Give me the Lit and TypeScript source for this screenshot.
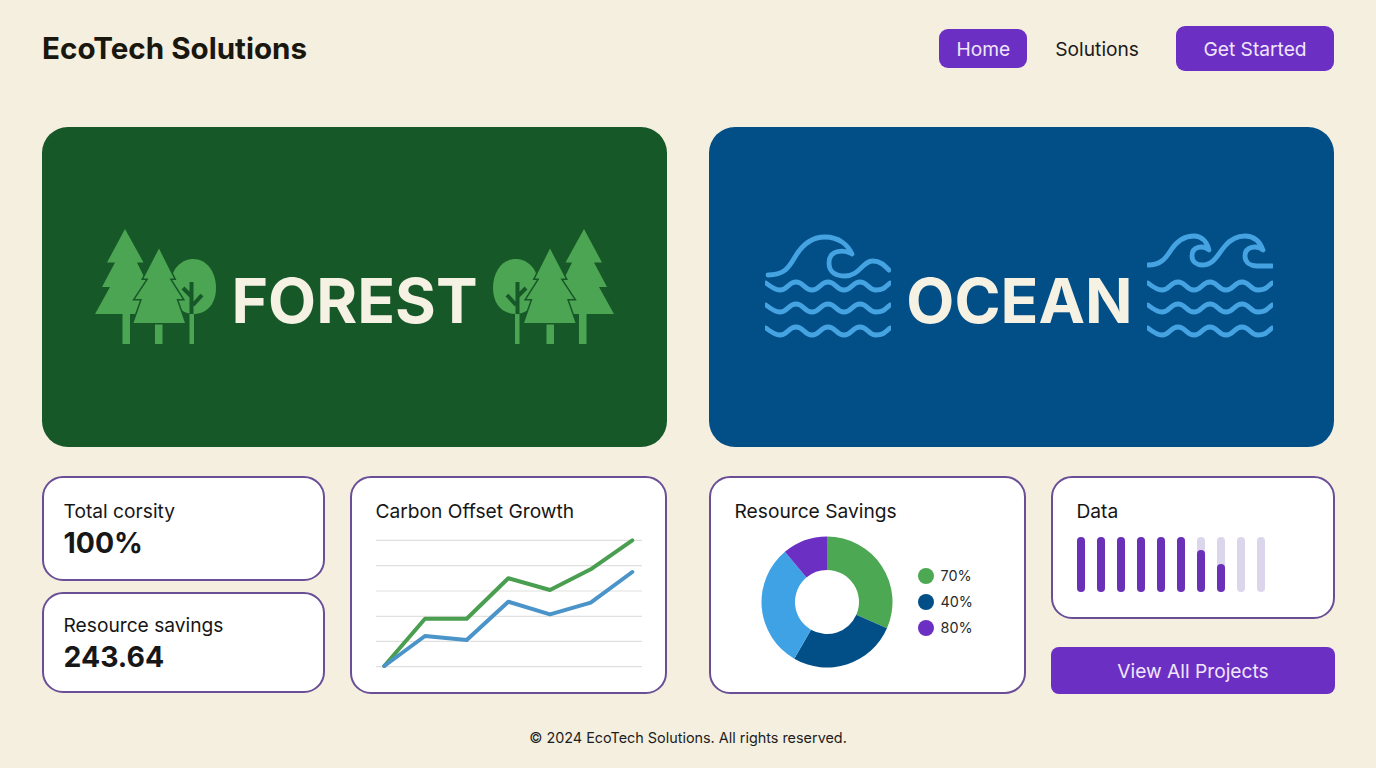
import { LitElement, html, css, svg } from "lit";
import { customElement } from "lit/decorators.js";

const ripple = (c: number) =>
  `M1 ${c - 3} C6 ${c + 1} 10 ${c + 4} 15 ${c + 4} C23 ${c + 4} 23 ${c - 4} 31 ${c - 4} S39 ${c + 4} 47 ${c + 4} S55 ${c - 4} 63 ${c - 4} S71 ${c + 4} 79 ${c + 4} S87 ${c - 4} 95 ${c - 4} S103 ${c + 4} 111 ${c + 4} S120 ${c + 1} 125 ${c - 3}`;

const polar = (r: number, deg: number) => {
  const a = ((deg - 90) * Math.PI) / 180;
  return [66 + r * Math.cos(a), 66 + r * Math.sin(a)];
};
const sector = (from: number, to: number) => {
  const R = 65.5, r = 32;
  const [x1, y1] = polar(R, from);
  const [x2, y2] = polar(R, to);
  const [x3, y3] = polar(r, to);
  const [x4, y4] = polar(r, from);
  const big = to - from > 180 ? 1 : 0;
  return `M${x1} ${y1} A${R} ${R} 0 ${big} 1 ${x2} ${y2} L${x3} ${y3} A${r} ${r} 0 ${big} 0 ${x4} ${y4} Z`;
};

const treeIcon = (flip: boolean) => html`
  <svg class=${flip ? "icon flip" : "icon"} width="121" height="118" viewBox="0 0 121 118">
    <path class="leaf" d="M97 31 C110 30 121 42 121 60 C121 76 112 86 98 86 C84 86 76 72 76 56 C76 42 85 32 97 31 Z" />
    <path class="gap" d="M96.5 54 V86 M88 60 L96 68 M107 67 L98 77" />
    <rect class="leaf-solid" x="94.5" y="86" width="4.5" height="30" />
    <rect class="leaf-solid" x="27.5" y="84" width="7.5" height="32" />
    <path class="leaf" d="M30 1 L48.5 34.5 H42 L54 59 H48 L62 86 H0 L15 59 H7 L20 34.5 H12 Z" />
    <rect class="leaf-solid" x="60" y="94" width="7.5" height="22" />
    <path class="leaf outlined" d="M64 20.5 L79 50.5 H74.5 L87.5 71 H81.5 L90 95 H38.5 L47 71 H40 L53.5 50.5 H48.5 Z" />
  </svg>
`;

const waveIcon = (double: boolean) => html`
  <svg class=${double ? "icon wave-b" : "icon"} width="126" height="108" viewBox="0 0 126 108">
    <g class="wave">
      ${double
        ? svg`<path d="M1 32 C14 32 19 25 24 17 C30 8 38 3 47 3 C55 3 60 9 62 17 C56 12 45 13 45 23 C45 29 50 32 55 32 C67 32 71 21 78 13 C84 6 90 3 98 3 C107 3 113 9 116 17 C110 12 98 13 98 23 C98 30 104 33 110 33 H125" />`
        : svg`<path d="M3 42 C20 42 24 34 30 24 C37 12 46 4 60 4 C74 4 83 12 87 21 C78 16 64 17 64 30 C64 40 72 43 80 43 C95 43 97 28 108 28 C115 28 119 32 124 37" />`}
      <path d=${ripple(53)} />
      <path d=${ripple(75)} />
      <path d=${ripple(98)} />
    </g>
  </svg>
`;

@customElement("app-root")
export class AppRoot extends LitElement {
  static styles = css`
    :host {
      display: block;
      height: 768px;
      overflow: hidden;
      background: #f4efdf;
      color: #161616;
      font-family: Inter, "Liberation Sans", sans-serif;
    }
    .page { padding: 26px 42px 0; }
    header {
      display: flex;
      align-items: center;
      height: 45px;
    }
    h1 {
      margin: 0 auto 0 0;
      font-size: 29.6px;
      font-weight: 700;
      line-height: 45px;
      color: #1a170f;
    }
    .btn {
      display: flex;
      align-items: center;
      justify-content: center;
      box-sizing: border-box;
      background: #6c2fc4;
      color: #f0e6fb;
      font-size: 19.2px;
      border-radius: 9px;
    }
    .home { width: 88px; height: 39px; }
    .link { margin: 0 37px 0 28px; font-size: 19.2px; color: #1a1a1a; }
    .start { width: 158px; height: 45px; }
    .heroes {
      display: grid;
      grid-template-columns: 1fr 1fr;
      gap: 42px;
      margin-top: 56px;
    }
    .hero {
      display: flex;
      align-items: center;
      justify-content: center;
      box-sizing: border-box;
      height: 320px;
      border-radius: 26px;
      color: #f5f1e3;
      font-size: 62.4px;
      font-weight: 700;
    }
    .forest { background: #165827; gap: 15px; }
    .ocean { background: #024f88; gap: 15px; padding-right: 5px; }
    .hero span { line-height: 70px; margin-top: 28px; }
    .icon { display: block; flex: none; }
    .flip { transform: scaleX(-1); }
    .wave-b { margin-left: -1px; }
    .leaf, .leaf-solid { fill: #4ca552; }
    .outlined { stroke: #165827; stroke-width: 3; paint-order: stroke; }
    .gap { fill: none; stroke: #165827; stroke-width: 4; }
    .wave path {
      fill: none;
      stroke: #46a3e2;
      stroke-width: 4.8;
      stroke-linecap: round;
      stroke-linejoin: round;
    }
    .bottom {
      display: grid;
      grid-template-columns: 1fr 1fr;
      gap: 42px;
      margin-top: 29px;
      height: 217px;
    }
    .pair { display: grid; gap: 25px; height: 100%; }
    .left { grid-template-columns: 283px 317px; }
    .right { grid-template-columns: 317px 284px; }
    .stack { display: flex; flex-direction: column; }
    .card {
      box-sizing: border-box;
      background: #fff;
      border: 2px solid #6a4f96;
      border-radius: 21px;
    }
    .stat {
      display: flex;
      flex-direction: column;
      justify-content: center;
      padding: 2px 19.5px 0;
    }
    .stat-a { height: 105px; }
    .stat-b { height: 101px; margin-top: 11px; }
    .label { font-size: 19.2px; line-height: 24px; }
    .value { font-size: 28.4px; font-weight: 700; line-height: 36px; margin-top: 2px; color: #171717; }
    .panel { padding: 20.5px 23.5px 0; height: 100%; }
    .chart { display: block; margin-top: 15px; }
    .line { fill: none; stroke-width: 4; stroke-linejoin: round; stroke-linecap: round; }
    .grid-line { stroke: #e0e0de; stroke-width: 1.2; }
    .donut-row { display: flex; align-items: center; gap: 25px; margin: 13px 0 0 26px; }
    .legend { display: flex; flex-direction: column; gap: 9px; font-size: 14.4px; }
    .legend div { display: flex; align-items: center; gap: 7px; height: 17px; color: #2a2a2a; }
    .dot { width: 16px; height: 16px; border-radius: 50%; }
    .data { height: 143px; }
    .bars { display: flex; gap: 12.1px; margin-top: 14px; }
    .track {
      display: flex;
      align-items: flex-end;
      width: 8px;
      height: 55px;
      border-radius: 4px;
      background: #dcd6ec;
    }
    .fill { width: 100%; border-radius: 4px; background: #6a31b8; }
    .view { height: 47px; margin-top: 28px; border-radius: 8px; }
    footer {
      margin-top: 36px;
      text-align: center;
      font-size: 14.4px;
      line-height: 17px;
      color: #1d1d1d;
    }
  `;

  render() {
    const green = "8.3,128 49,80.7 90.7,80.7 132.3,40.3 174,52 214.7,31.3 256.3,2.3";
    const blue = "8.3,128 49,98 90.7,102 132.3,63.7 174,76.3 214.7,64.7 256.3,34";
    const grid = [2.3, 27.7, 53, 78.3, 103.3, 128.7];
    const bars = [100, 100, 100, 100, 100, 100, 76, 50, 0, 0];
    return html`
      <div class="page">
        <header>
          <h1>EcoTech Solutions</h1>
          <div class="btn home">Home</div>
          <div class="link">Solutions</div>
          <div class="btn start">Get Started</div>
        </header>
        <section class="heroes">
          <div class="hero forest">${treeIcon(false)}<span>FOREST</span>${treeIcon(true)}</div>
          <div class="hero ocean">${waveIcon(false)}<span>OCEAN</span>${waveIcon(true)}</div>
        </section>
        <section class="bottom">
          <div class="pair left">
            <div class="stack">
              <div class="card stat stat-a">
                <div class="label">Total corsity</div>
                <div class="value">100%</div>
              </div>
              <div class="card stat stat-b">
                <div class="label">Resource savings</div>
                <div class="value">243.64</div>
              </div>
            </div>
            <div class="card panel">
              <div class="label">Carbon Offset Growth</div>
              <svg class="chart" width="266" height="132" viewBox="0 0 266 132">
                ${grid.map((y) => svg`<line class="grid-line" x1="0" x2="266" y1=${y} y2=${y} />`)}
                <polyline class="line" stroke="#4a9e50" points=${green} />
                <polyline class="line" stroke="#4a94c9" points=${blue} />
              </svg>
            </div>
          </div>
          <div class="pair right">
            <div class="card panel">
              <div class="label">Resource Savings</div>
              <div class="donut-row">
                <svg width="132" height="132" viewBox="0 0 132 132">
                  <path fill="#4ca852" d=${sector(0, 113.7)} />
                  <path fill="#024f88" d=${sector(113.7, 210)} />
                  <path fill="#3ea2e5" d=${sector(210, 320)} />
                  <path fill="#6c2fc4" d=${sector(320, 360)} />
                </svg>
                <div class="legend">
                  <div><span class="dot" style="background:#4ca852"></span>70%</div>
                  <div><span class="dot" style="background:#024f88"></span>40%</div>
                  <div><span class="dot" style="background:#6c2fc4"></span>80%</div>
                </div>
              </div>
            </div>
            <div class="stack">
              <div class="card panel data">
                <div class="label">Data</div>
                <div class="bars">
                  ${bars.map(
                    (h) => html`<div class="track"><div class="fill" style="height:${h}%"></div></div>`
                  )}
                </div>
              </div>
              <div class="btn view">View All Projects</div>
            </div>
          </div>
        </section>
        <footer>© 2024 EcoTech Solutions. All rights reserved.</footer>
      </div>
    `;
  }
}
